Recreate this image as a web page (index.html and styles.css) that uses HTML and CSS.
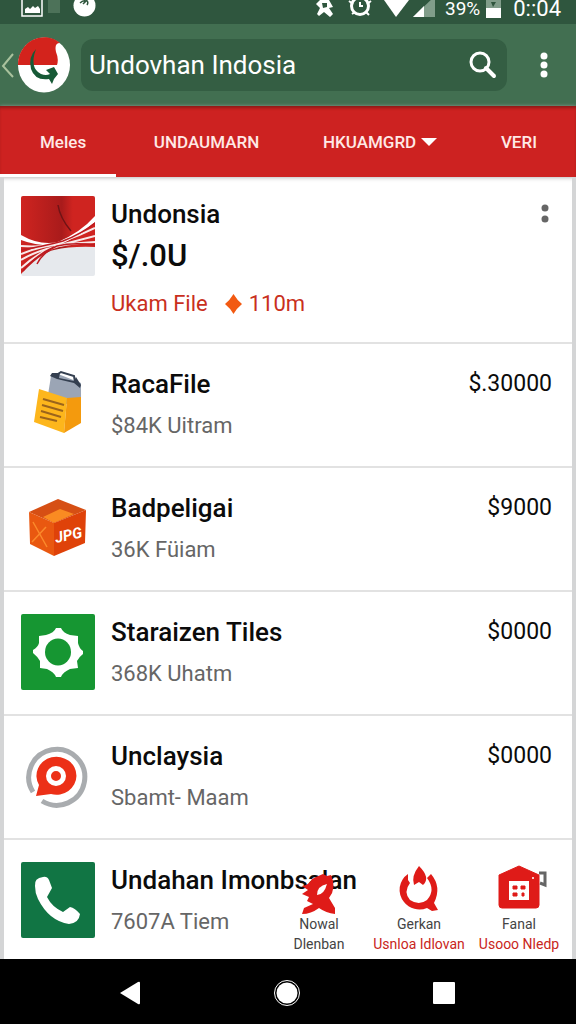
FILE: index.html
```html
<!DOCTYPE html>
<html lang="id">
<head>
<meta charset="utf-8">
<meta name="viewport" content="width=device-width, initial-scale=1">
<title>Undovhan Indosia</title>
<link rel="stylesheet" href="styles.css">
</head>
<body>
<div class="status">
  <svg class="status-left" viewBox="0 0 100 24" width="100" height="24" aria-hidden="true">
    <path d="M22-4V16H42V-4" fill="none" stroke="#fff" stroke-width="1.5"/>
    <path d="M25 13V9l3-2 2 2 3-3 2 2 3-2 2 3v4z" fill="#fff"/>
    <rect x="48" y="0" width="12" height="13" fill="#4d7259"/>
    <circle cx="84.500" cy="5.500" r="11" fill="#fff"/>
    <path d="M80 3q3-3 6-2l-3 3M86 0q3 2 1 5" stroke="#2f553d" stroke-width="1.500" fill="none"/>
  </svg>
  <div class="status-right">
    <svg viewBox="0 0 122 24" width="122" height="24" aria-hidden="true">
      <path d="M2 4l4-4h9l4 7-4 1 4 6-3 3-6-5-5 4-2-2 3-6zM8 3l1 5 4-1V3z" fill="#fff" fill-rule="evenodd"/>
      <circle cx="46" cy="6" r="8.500" fill="none" stroke="#fff" stroke-width="3"/>
      <path d="M46 2v4h3M35 1l4 3M57 1l-4 3M38 14l3-2M55 15l-3-3" stroke="#fff" stroke-width="2" fill="none"/>
      <path d="M70 0H95L82 17z" fill="#fff"/>
      <path d="M121-4V17H99z" fill="#819d8a"/>
      <path d="M110 6V17H99z" fill="#fff"/>
    </svg>
    <span class="battery-text">39%</span>
    <svg viewBox="0 0 15 24" width="15" height="24" aria-hidden="true"><path d="M0 0H15V9H0z" fill="#819d8a"/><path d="M0 8H15V18H0z" fill="#fff"/><path d="M5 2h5L7 7z" fill="#2f553d"/></svg>
    <span class="clock">0::04</span>
  </div>
</div>

<header class="toolbar">
  <button class="icon-button back" aria-label="Back">
    <svg viewBox="0 0 14 28" width="14" height="28"><path d="M13 3L3 15 13 26" fill="none" stroke="#a9c29d" stroke-width="2"/></svg>
  </button>
  <svg class="logo" viewBox="0 0 52 56" width="52" height="56" aria-hidden="true">
    <ellipse cx="26" cy="28" rx="26" ry="27.500" fill="#fff"/>
    <path d="M0 28A26 27.500 0 0 1 42 6Q36 6 38 15 41 22 39 28z" fill="#d3231c"/>
    <path d="M18 12Q11 31 23 37 28 39 32 37L28 33 36 30 40 37 36 42 34 47 31 42Q17 44 13 32 10 20 18 12z" fill="#175a36"/>
  </svg>
  <form class="search" role="search">
    <input class="search-input" type="text" aria-label="Search" value="Undovhan Indosia">
    <button class="icon-button" type="button" aria-label="Search">
      <svg viewBox="0 0 28 28" width="28" height="28"><circle cx="11" cy="11" r="9" fill="none" stroke="#fff" stroke-width="3"/><path d="M17 17l8 8" stroke="#fff" stroke-width="4" stroke-linecap="round"/></svg>
    </button>
  </form>
  <button class="icon-button more" aria-label="More options">
    <svg viewBox="0 0 8 26" width="8" height="26" fill="#fff"><circle cx="4" cy="4" r="3.500"/><circle cx="4" cy="13" r="3.500"/><circle cx="4" cy="22" r="3.500"/></svg>
  </button>
</header>

<nav class="tabs">
  <button class="tab tab-active">Meles</button>
  <button class="tab">UNDAUMARN</button>
  <button class="tab" aria-haspopup="true">HKUAMGRD
    <svg viewBox="0 0 16 8" width="16" height="8" aria-hidden="true"><path d="M0 0H16L8 8z" fill="#fff"/></svg>
  </button>
  <button class="tab">VERI</button>
</nav>

<main class="content">
  <ul class="list">
    <li class="row row-featured">
      <svg class="art" viewBox="0 0 74 80" width="74" height="80" aria-hidden="true">
        <defs>
          <clipPath id="tile"><rect width="74" height="80" rx="2"/></clipPath>
          <linearGradient id="cloth" x1="0" x2="1"><stop offset="0" stop-color="#cf2420"/><stop offset=".55" stop-color="#a91b1b"/><stop offset=".7" stop-color="#cf2420"/></linearGradient>
        </defs>
        <g clip-path="url(#tile)">
          <rect width="74" height="80" fill="#e6e9ed"/>
          <path d="M0 0H74V51Q50 50 33 54 20 57 0 78z" fill="url(#cloth)"/>
          <path d="M37 9Q39 22 50 35" stroke="#701315" stroke-width="1.500" fill="none"/>
          <path d="M0 39Q19 50 37 46 60 36 74 20V26Q55 42 38 49 18 51 0 44z" fill="#fff"/>
          <path d="M0 50Q22 52 40 46 58 40 74 32M0 58Q22 49 43 48 59 44 74 40M0 64Q26 48 74 46M0 72Q22 52 44 49" fill="none" stroke="#f8e9e9" stroke-width="2"/>
          <path d="M0 54Q24 50 42 45 60 38 74 27M2 75Q15 59 33 51M16 68Q22 56 36 50 52 46 74 49" fill="none" stroke="#bd1b20" stroke-width="1.500"/>
        </g>
      </svg>
      <div class="info">
        <h2 class="name">Undonsia</h2>
        <p class="amount">$/.0U</p>
        <p class="meta"><span>Ukam File</span>
          <svg viewBox="0 0 17 20" width="17" height="20" aria-hidden="true"><path d="M8.500 0Q12 6 17 10 12 14 8.500 20 5 14 0 10 5 6 8.500 0z" fill="#f25a12"/></svg>
          <span>110m</span></p>
      </div>
      <button class="icon-button" aria-label="Item options">
        <svg viewBox="0 0 8 20" width="8" height="20" fill="#666"><circle cx="4" cy="4" r="3.500"/><circle cx="4" cy="15" r="3.500"/></svg>
      </button>
    </li>
    <li class="row">
      <svg class="art" viewBox="0 0 74 76" width="74" height="76" aria-hidden="true">
        <path d="M30 10L37 8 60 17V40L26 35z" fill="#9ba5b5"/>
        <path d="M29 10L31 7 39 7 38 12 53 15 55 11 60 19 59 22 53 17 36 13z" fill="#343f50"/>
        <path d="M37 12V8l3-2 13 4 1 6" fill="none" stroke="#343f50" stroke-width="2"/>
        <path d="M18 23L46 32 43 67 13 56z" fill="#fdb61c"/>
        <path d="M46 32L60 31V57L43 67z" fill="#f49a0d"/>
        <path d="M22 33L43 39M21 39L42 45M20 45L40 51M19 51L36 55" stroke="#9b641c" stroke-width="2"/>
      </svg>
      <div class="info"><h2 class="name">RacaFile</h2><p class="detail">$84K Uitram</p></div>
      <span class="price">$.30000</span>
    </li>
    <li class="row">
      <svg class="art" viewBox="0 0 74 76" width="74" height="76" aria-hidden="true">
        <path d="M8 22L37 9 65 20 33 33z" fill="#d64f14"/>
        <path d="M22 27L39 19 53 24 33 33z" fill="#fa8b22"/>
        <path d="M8 22L33 33V66L9 54z" fill="#e95810"/>
        <path d="M33 33L65 20 64 53 33 66z" fill="#df4209"/>
        <path d="M12 32L26 57M25 37L11 52" fill="none" stroke="#fb8a2b" stroke-width="1.500"/>
        <text class="box-label" x="35" y="53" transform="rotate(-12 35 53)">JPG</text>
      </svg>
      <div class="info"><h2 class="name">Badpeligai</h2><p class="detail">36K Füiam</p></div>
      <span class="price">$9000</span>
    </li>
    <li class="row">
      <svg class="art" viewBox="0 0 74 76" width="74" height="76" aria-hidden="true">
        <rect width="74" height="76" rx="2" fill="#169632"/>
        <path d="M25 21Q33 19 35 14H40Q42 19 49 21L57 22V29Q58 34 62 37V40Q58 43 56 47L57 54 49 55Q42 58 40 63H35Q33 58 26 55L19 54V47Q17 43 12 39V36Q17 33 18 29V22z" fill="#fff"/>
        <ellipse cx="37" cy="38" rx="13" ry="13.500" fill="#169632"/>
      </svg>
      <div class="info"><h2 class="name">Staraizen Tiles</h2><p class="detail">368K Uhatm</p></div>
      <span class="price">$0000</span>
    </li>
    <li class="row">
      <svg class="art" viewBox="0 0 74 76" width="74" height="76" aria-hidden="true">
        <path d="M12 54A28 28 0 1 1 21 63" fill="none" stroke="#a9acaf" stroke-width="5"/>
        <path d="M18 47A20 19 0 1 1 30 56L15 58z" fill="#ec3017"/>
        <circle cx="35" cy="38" r="7.500" fill="none" stroke="#fff" stroke-width="5"/>
      </svg>
      <div class="info"><h2 class="name">Unclaysia</h2><p class="detail">Sbamt- Maam</p></div>
      <span class="price">$0000</span>
    </li>
    <li class="row row-last">
      <svg class="art" viewBox="0 0 74 76" width="74" height="76" aria-hidden="true">
        <rect width="74" height="76" rx="2" fill="#117544"/>
        <path d="M14 24Q13 16 22 15 26 14 28 18L31 26 26 35Q31 45 42 50L49 45Q54 46 59 52 58 61 48 62 28 59 17 37 14 31 14 24z" fill="#fff"/>
      </svg>
      <div class="info"><h2 class="name">Undahan Imonbsalan</h2><p class="detail">7607A Tiem</p></div>
    </li>
  </ul>

  <nav class="shortcuts">
    <a class="shortcut" href="#">
      <svg viewBox="0 0 50 48" width="50" height="48" aria-hidden="true">
        <path d="M29 8L33 10 37 9Q43 22 35 32L41 42V48Q32 47 25 42 17 48 8 48L10 42 19 38 13 35 15 31 8 28 14 24 8 20Q15 19 18 13 24 10 29 8z" fill="#df1b18"/>
        <path d="M33 18Q23 20 23 29 30 29 33 18z" fill="#fff"/>
      </svg>
      <span class="label">Nowal</span><span class="label">Dlenban</span>
    </a>
    <a class="shortcut" href="#">
      <svg viewBox="0 0 50 48" width="50" height="48" aria-hidden="true">
        <path d="M14 8A19 19 0 0 0 10 36 19 18 0 0 0 33 42L38 45 44 44 40 37Q48 21 37 8L33 12Q42 24 33 34 25 40 16 34 9 26 16 17L14 14z" fill="#df1b18"/>
        <path d="M25 0Q17 10 20 19L25 16 29 19Q37 12 25 0z" fill="#df1b18"/>
      </svg>
      <span class="label">Gerkan</span><span class="label label-red">Usnloa Idlovan</span>
    </a>
    <a class="shortcut" href="#">
      <svg viewBox="0 0 50 48" width="50" height="48" aria-hidden="true">
        <path d="M45 7h6v12l-5-2" fill="none" stroke="#656565" stroke-width="3"/>
        <path d="M5 9L25 0 45 9V39Q45 42 42 42H8Q5 42 5 39z" fill="#df1b18" stroke="#df1b18" stroke-linejoin="round"/>
        <rect x="15" y="15" width="20" height="19" fill="#fff"/>
        <path d="M19 20h4v3h-4zM27 20h4v3h-4zM19 27h4v3h-4zM28 27h2v3h-2z" fill="#df1b18" stroke="#df1b18"/>
        <circle cx="39" cy="12" r="1" fill="#fff"/>
      </svg>
      <span class="label">Fanal</span><span class="label label-red">Usooo Nledp</span>
    </a>
  </nav>
</main>

<footer class="system-nav">
  <button class="icon-button" aria-label="Back"><svg viewBox="0 0 28 28" width="28" height="28"><path d="M4 14L22 3Q24 2 24 4V24Q24 26 22 25z" fill="#fff"/></svg></button>
  <button class="icon-button" aria-label="Home"><svg viewBox="0 0 28 28" width="28" height="28"><circle cx="14" cy="14" r="12.500" fill="none" stroke="#fff"/><circle cx="14" cy="14" r="10.500" fill="#fff"/></svg></button>
  <button class="icon-button" aria-label="Recent apps"><svg viewBox="0 0 28 28" width="28" height="28"><rect x="3" y="3" width="22" height="22" rx="1" fill="#fff"/></svg></button>
</footer>
</body>
</html>
```
FILE: styles.css
```css
* { box-sizing: border-box; }

body {
  margin: 0;
  min-height: 100vh;
  display: flex;
  flex-direction: column;
  background: #fff;
  color: #0b0b0b;
  font-family: Roboto, "Liberation Sans", sans-serif;
}

h2, p, ul { margin: 0; padding: 0; }

button {
  border: 0;
  background: none;
  color: inherit;
  font-family: inherit;
  cursor: pointer;
}

svg { display: block; flex: none; }

.icon-button { padding: 0; flex: none; }

.status {
  height: 24px;
  display: flex;
  justify-content: space-between;
  background: #2f563e;
  color: #fff;
}

.status-right {
  display: flex;
  padding-right: 15px;
}

.battery-text {
  margin: 0 6px 0 9px;
  font-size: 19px;
  line-height: 18px;
}

.clock {
  margin-left: 12px;
  font-size: 22px;
  line-height: 18px;
}

.toolbar {
  height: 82px;
  display: flex;
  align-items: center;
  padding: 0 28px 0 0;
  background: #426f51;
}

.logo { margin: 0 11px 0 4px; }

.search {
  flex: 1;
  min-width: 0;
  height: 52px;
  display: flex;
  align-items: center;
  padding: 0 10px 0 8px;
  border-radius: 12px;
  background: #345e43;
}

.search-input {
  flex: 1;
  min-width: 0;
  padding: 0;
  border: 0;
  outline: 0;
  background: none;
  color: #fff;
  font: 26px/32px Roboto, "Liberation Sans", sans-serif;
}

.more { margin-left: 33px; }

.tabs {
  height: 71px;
  display: flex;
  justify-content: space-between;
  padding-right: 13px;
  background: #cd2221;
  box-shadow: inset 0 3px 3px -1px #8f1b18, 0 1px 4px #bbb;
  position: relative;
}

.tab {
  display: flex;
  align-items: center;
  gap: 5px;
  padding: 0 26px;
  color: #ffe9e6;
  font-size: 17px;
  font-weight: 500;
}

.tab-active {
  padding: 3px 30px 0 40px;
  border-bottom: 3px solid #fff;
}

.content {
  flex: 1;
  position: relative;
  border: solid #d4d5d6;
  border-width: 0 4px;
}

.list { list-style: none; }

.row {
  height: 124px;
  display: flex;
  align-items: flex-start;
  gap: 16px;
  padding: 22px 17px 0;
  border-bottom: 2px solid #e2e2e2;
}

.row-featured {
  height: 167px;
  padding-top: 19px;
}

.row-featured .icon-button { padding: 8px 6px 0 0; }

.row-last {
  height: 118px;
  border-bottom: 0;
}

.info {
  flex: 1;
  min-width: 0;
  white-space: nowrap;
}

.name {
  font-size: 26px;
  line-height: 36px;
  font-weight: 500;
}

.amount {
  font-size: 31px;
  line-height: 48px;
  font-weight: 500;
}

.meta {
  display: flex;
  align-items: center;
  gap: 7px;
  padding-top: 8px;
  color: #c9301d;
  font-size: 22px;
  line-height: 32px;
}

.meta svg { margin-left: 10px; }

.detail {
  padding-top: 8px;
  color: #666;
  font-size: 22px;
  line-height: 32px;
}

.price {
  padding-right: 3px;
  font-size: 23px;
  line-height: 36px;
}

.box-label {
  fill: #fff;
  font-size: 15px;
  font-weight: 700;
  font-style: italic;
}

.shortcuts {
  position: absolute;
  right: 3px;
  bottom: 5px;
  display: grid;
  grid-template-columns: repeat(3, 100px);
}

.shortcut {
  display: flex;
  flex-direction: column;
  align-items: center;
  text-decoration: none;
  white-space: nowrap;
}

.shortcut svg { overflow: visible; }

.label {
  color: #444;
  font-size: 14px;
  line-height: 20px;
}

.label-red { color: #c92520; }

.system-nav {
  height: 65px;
  display: flex;
  justify-content: space-between;
  align-items: center;
  padding: 3px 118px 0 116px;
  background: #000;
}
```
